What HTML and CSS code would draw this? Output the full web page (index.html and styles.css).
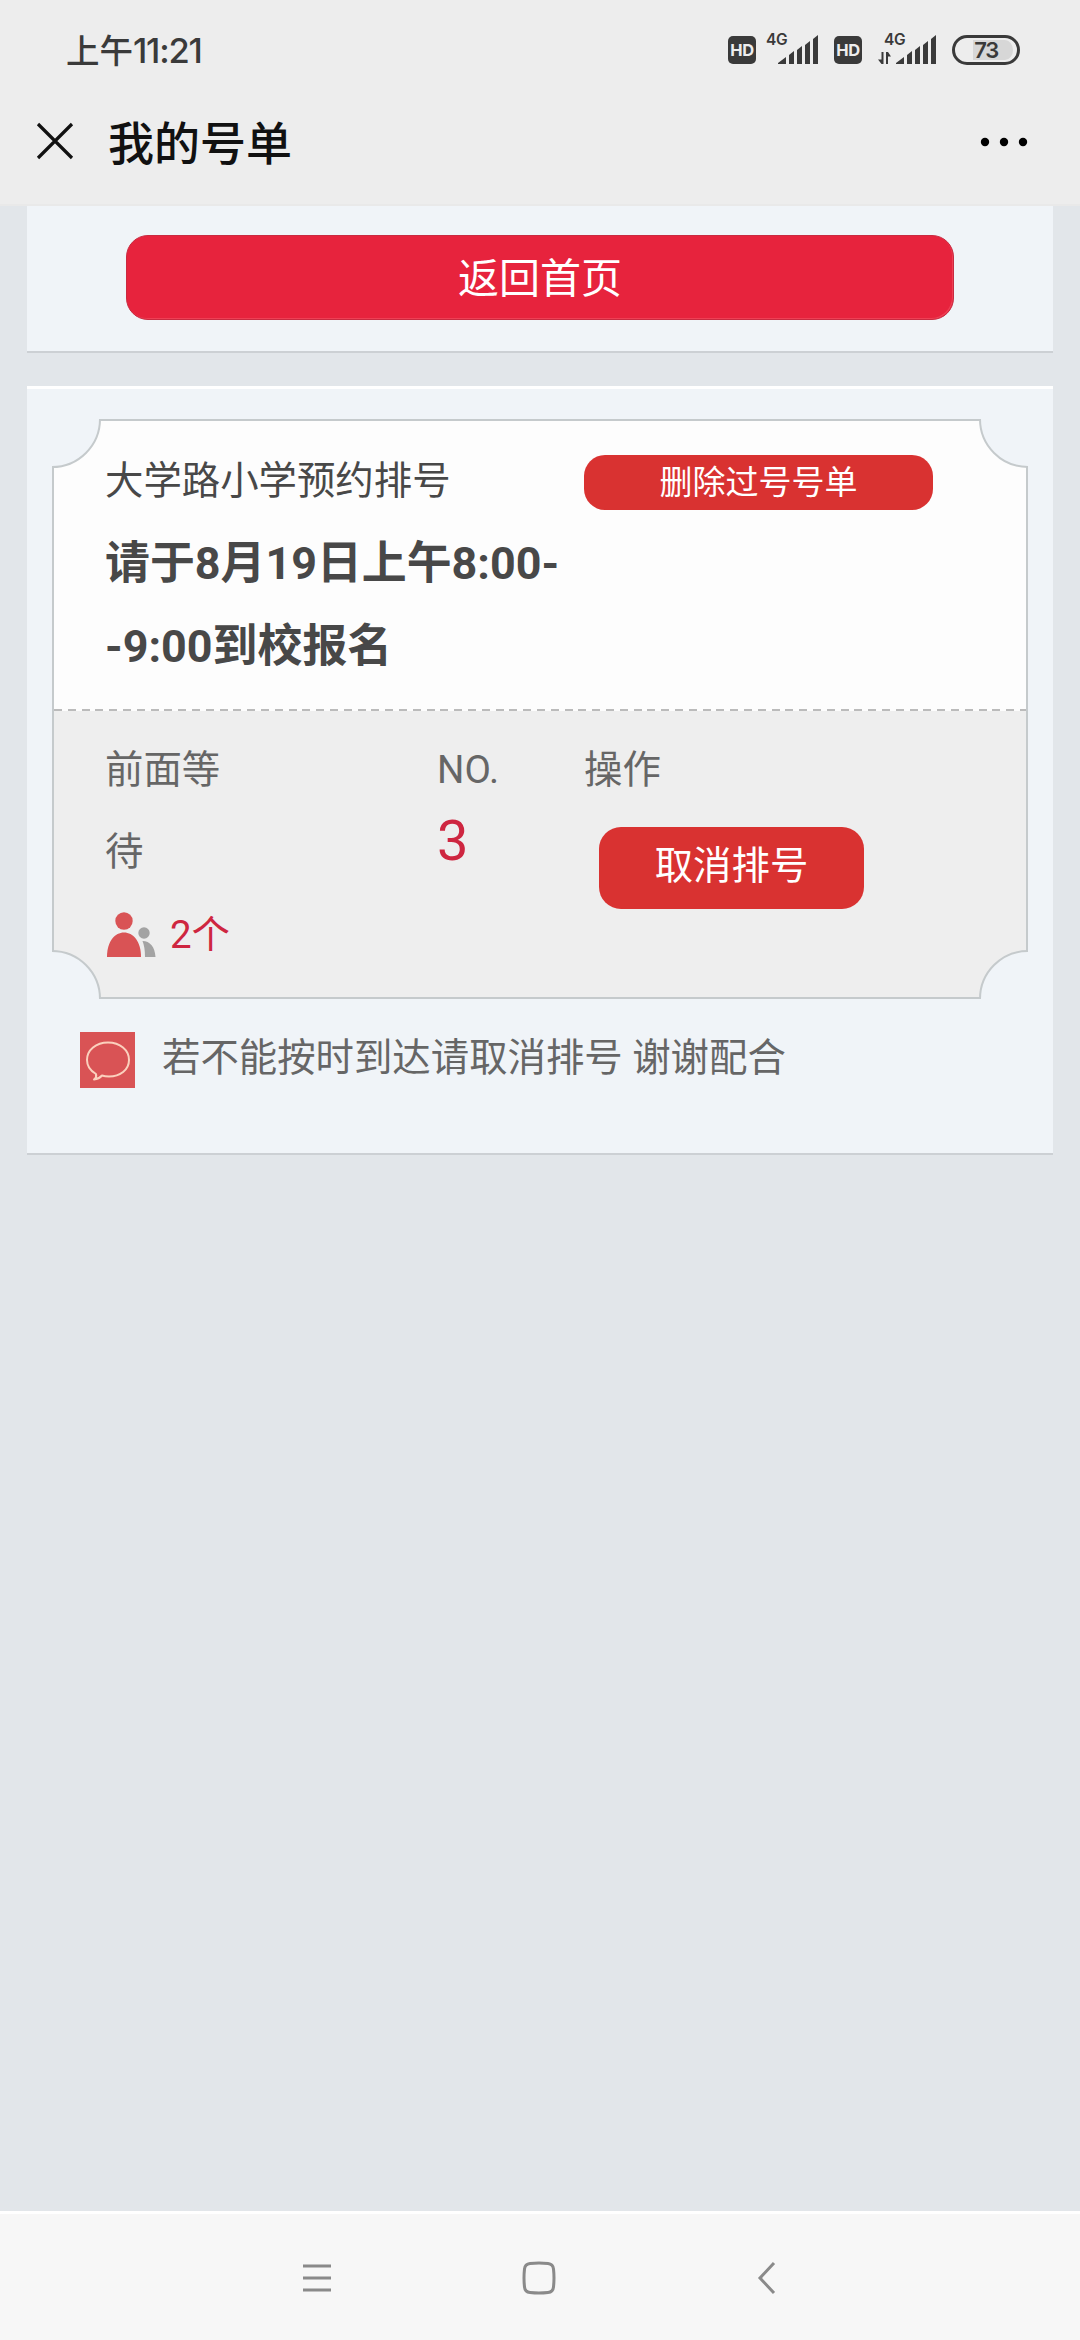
FILE: index.html
```html
<!DOCTYPE html>
<html lang="zh-CN">
<head>
<meta charset="utf-8">
<title>我的号单</title>
<link rel="stylesheet" href="styles.css">
</head>
<body>
<div class="screen">
  <header class="top">
    <div class="status">
      <span class="clock">上午<span class="clock-digits">11:21</span></span>
      <div class="indicators">
        <span class="hd">HD</span>
        <div class="signal">
          <span class="net">4G</span>
          <svg class="bars" viewBox="0 0 53 30"><path d="M13 29v-1l8-6v7zM24 29V20l5-4v13zM32 29V15l5-4v18zM40 29V10l5-4v23zM48 29V4l5-4v29z"/></svg>
        </div>
        <span class="hd hd-second">HD</span>
        <div class="signal signal-data">
          <span class="net">4G</span>
          <svg class="bars" viewBox="0 0 53 30"><path d="M13 29v-1l8-6v7zM24 29V20l5-4v13zM32 29V15l5-4v18zM40 29V10l5-4v23zM48 29V4l5-4v29zM.5 17v12H-1.500L-5 24.500h3.500V17zM3 29V17h2l3 4.500H5V29z"/></svg>
        </div>
        <span class="battery">73</span>
      </div>
    </div>
    <div class="titlebar">
      <svg class="close" viewBox="0 0 38 38"><path d="M2 2l34 34M36 2L2 36"/></svg>
      <h1 class="title">我的号单</h1>
      <svg class="more" viewBox="0 0 48 10"><circle cx="5" cy="5" r="4.200"/><circle cx="24" cy="5" r="4.200"/><circle cx="43" cy="5" r="4.200"/></svg>
    </div>
  </header>

  <main class="content">
    <section class="panel panel-home">
      <a class="home-btn">返回首页</a>
    </section>

    <section class="panel panel-ticket">
      <article class="ticket">
        <div class="ticket-head">
          <div class="ticket-info">
            <p class="school">大学路小学预约排号</p>
            <p class="when">请于8月19日上午8:00-<br>-9:00到校报名</p>
          </div>
          <a class="delete-btn">删除过号号单</a>
        </div>
        <div class="ticket-body">
          <div class="col-wait">
            <p>前面等<br>待</p>
            <p class="count">
              <svg class="people" viewBox="0 0 50 46"><g fill="#d95355"><circle cx="18" cy="9" r="8.700"/><path d="M1 45C1 29 9 20.500 18 20.500S35 29 35 45z"/></g><g fill="#a3a3a3"><circle cx="38" cy="21" r="5.700"/><path d="M36.500 29C44 29 49 35 49.500 45H39Q39 35 36.500 29z"/></g></svg>
              <span>2个</span>
            </p>
          </div>
          <div class="col-no">
            <p>NO.</p>
            <p class="number">3</p>
          </div>
          <div class="col-action">
            <p>操作</p>
            <a class="cancel-btn">取消排号</a>
          </div>
        </div>
        <i class="notch tl"></i><i class="notch tr"></i><i class="notch bl"></i><i class="notch br"></i>
      </article>
      <div class="notice">
        <svg class="bubble" viewBox="0 0 55 56"><rect width="55" height="56" fill="#d95355"/><path d="M16 42C9 38 7 33 7 28C7 18 16 10.500 28 10.500S49 18 49 28S40 44.500 29 44.500Q25 44.500 22 43.500Q19 47 14 47.500Q17 45 16 42z" fill="none" stroke="#fbd0bd" stroke-width="2" stroke-linejoin="round"/></svg>
        <span>若不能按时到达请取消排号 谢谢配合</span>
      </div>
    </section>
  </main>

  <nav class="navbar">
    <svg class="nav-menu" viewBox="0 0 30 34"><path d="M1 5h28M1 17h28M1 29h28"/></svg>
    <svg class="nav-home" viewBox="0 0 34 34"><path d="M8 2.500Q17 1.500 26 2.500Q31 3 31.500 8Q32.500 17 31.500 26Q31 31 26 31.500Q17 32.500 8 31.500Q3 31 2.500 26Q1.500 17 2.500 8Q3 3 8 2.500z"/></svg>
    <svg class="nav-back" viewBox="0 0 18 34"><path d="M16 2L2 17l14 15"/></svg>
  </nav>
</div>
</body>
</html>
```

FILE: styles.css
```css
* { box-sizing: border-box; }
body {
  margin: 0;
  font-family: Roboto, "Noto Sans CJK SC", sans-serif;
  color: #666;
}
p, h1 { margin: 0; }
svg { display: block; flex: none; overflow: visible; }

.screen {
  width: 1080px;
  height: 2340px;
  display: flex;
  flex-direction: column;
  background: #e2e6ea;
}

/* system status and title bar */
.top {
  height: 206px;
  flex: none;
  background: #ededed;
  border-bottom: 2px solid #e9e9e9;
}
.status {
  height: 100px;
  padding: 0 60px 0 66px;
  display: flex;
  align-items: center;
  justify-content: space-between;
  color: #3a3a3a;
}
.clock {
  font: 500 33.500px/48px "Noto Sans CJK SC", sans-serif;
}
.clock-digits {
  font-family: Inter, sans-serif;
  font-size: 34.500px;
  letter-spacing: -1.200px;
}
.indicators { display: flex; align-items: center; }
.hd {
  width: 28px;
  height: 28px;
  border-radius: 5px;
  background: #3a3a3a;
  color: #ededed;
  font: 700 16.500px/29px Inter, sans-serif;
  letter-spacing: -.3px;
  text-align: center;
}
.signal {
  position: relative;
  width: 53px;
  margin-left: 9px;
}
.signal-data { margin-left: 21px; }
.bars { width: 53px; height: 30px; fill: #3a3a3a; }
.net {
  position: absolute;
  left: 1px;
  top: -3px;
  font: 600 15.500px/16px Inter, sans-serif;
  letter-spacing: -.3px;
}
.hd-second { margin-left: 16px; }
.battery {
  width: 68px;
  height: 30px;
  margin-left: 16px;
  border: 3px solid #3a3a3a;
  border-radius: 15px;
  background: #ededed linear-gradient(90deg, #ededed 14px, #d7d7d7 14px) content-box;
  padding: 2px 4px;
  font: 600 22px/20px Inter, sans-serif;
  letter-spacing: -1.500px;
  text-align: center;
}
.titlebar {
  height: 84px;
  padding: 0 52px 0 36px;
  display: flex;
  align-items: center;
}
.close { width: 38px; height: 38px; margin-top: -2px; stroke: #111; stroke-width: 3.200; }
.title {
  margin: -5px 0 0 34px;
  font: 500 46px/68px "Noto Sans CJK SC", sans-serif;
  color: #111;
}
.more { width: 48px; height: 10px; margin-left: auto; fill: #000; }

/* page content */
.content {
  flex: 1;
  padding: 0 27px;
  display: flex;
  flex-direction: column;
  gap: 33px;
}
.panel {
  background: #f0f4f8;
  border-bottom: 2px solid #ccd0d4;
}
.panel-home {
  height: 147px;
  padding: 29px 99px 0;
}
.home-btn {
  display: block;
  height: 85px;
  border: 1px solid #c92a40;
  border-radius: 22px;
  background: #e7233d;
  box-shadow: inset -1px -1px 0 #ee4055;
  color: #fff;
  font-size: 41px;
  line-height: 86px;
  text-align: center;
}
.panel-ticket {
  height: 769px;
  padding: 30px 25px 0;
  border-top: 3px solid #fff;
}
.ticket {
  position: relative;
  height: 580px;
  border: 2px solid #c5cacc;
  background: #eee;
  margin-bottom: 33px;
}
.ticket-head {
  height: 290px;
  padding: 19px 93px 0 51px;
  display: flex;
  justify-content: space-between;
  color: #484848;
  background:
    repeating-linear-gradient(90deg, #bbb 0 8px, #fdfdfd 8px 13.800px) 0 100% / 100% 2px no-repeat,
    #fdfdfd;
}
.school { font-size: 38.400px; line-height: 82px; }
.when { font-size: 44.900px; line-height: 83px; font-weight: 700; }
.delete-btn {
  width: 349px;
  height: 55px;
  margin-top: 15px;
  border-radius: 21px;
  background: #d93231;
  color: #fff;
  font-size: 33px;
  line-height: 55px;
  text-align: center;
}
.ticket-body {
  padding: 18px 0 0 51px;
  display: grid;
  grid-template-columns: 332px 147px 1fr;
  font-size: 38.400px;
  line-height: 82px;
}
.count {
  display: flex;
  align-items: center;
  gap: 14px;
  margin-top: 1px;
  color: #ce2640;
}
.people { width: 50px; height: 46px; margin-left: 1px; }
.number {
  font-size: 56px;
  line-height: 61px;
  color: #ce2640;
}
.cancel-btn {
  display: block;
  width: 265px;
  height: 82px;
  margin: 16px 0 0 15px;
  border-radius: 22px;
  background: #d93231;
  color: #fff;
  line-height: 78px;
  text-align: center;
}

/* scooped corners drawn over the ticket edge */
.notch {
  position: absolute;
  width: 98px;
  height: 98px;
  border: 2px solid #c5cacc;
  border-radius: 50%;
  background: #f0f4f8;
}
.tl { left: -51px; top: -51px; clip-path: inset(49px 0 0 49px); }
.tr { right: -51px; top: -51px; clip-path: inset(49px 49px 0 0); }
.bl { left: -51px; bottom: -51px; clip-path: inset(0 0 49px 49px); }
.br { right: -51px; bottom: -51px; clip-path: inset(0 49px 49px 0); }

.notice {
  display: flex;
  align-items: flex-start;
  padding-left: 28px;
  gap: 27px;
  font-size: 38.400px;
  line-height: 52px;
}
.bubble { width: 55px; height: 56px; }

/* system navigation */
.navbar {
  height: 129px;
  flex: none;
  border-top: 3px solid #fff;
  padding: 1px 304px 0 302px;
  display: grid;
  grid-template-columns: 1fr 34px 1fr;
  align-items: center;
  background: #f7f7f7;
  fill: none;
  stroke: #8a8a8a;
  stroke-width: 3;
}
.nav-menu { width: 30px; height: 34px; }
.nav-home { width: 34px; height: 34px; }
.nav-back { width: 18px; height: 34px; justify-self: end; }
```
